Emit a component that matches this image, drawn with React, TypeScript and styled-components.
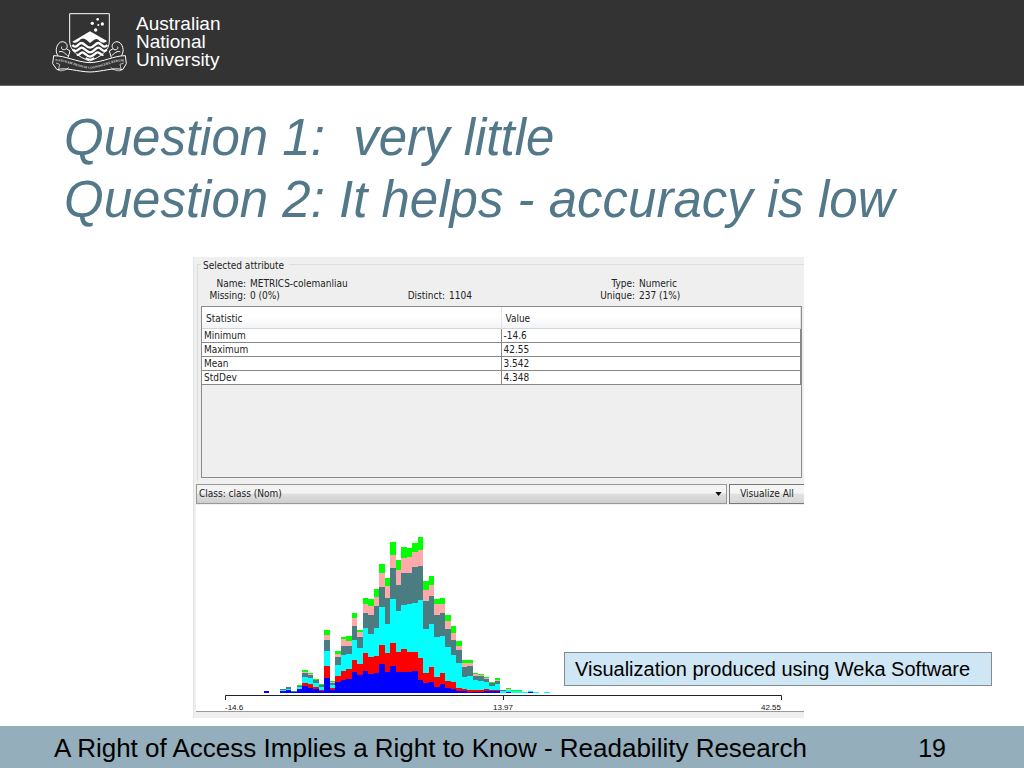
import React from "react";
import styled, { createGlobalStyle } from "styled-components";

const GlobalStyle = createGlobalStyle`
  * { box-sizing: border-box; }
  body { margin: 0; background: #fff; font-family: "Liberation Sans", Arial, sans-serif; color: #000; }
`;

const Slide = styled.div`
  min-height: 100vh;
  display: flex;
  flex-direction: column;
`;

const Header = styled.header`
  display: flex;
  align-items: flex-start;
  gap: 9px;
  height: 86px;
  padding: 12px 52px 0;
  background: #333;
  border-bottom: 1px solid #666;
`;

const Crest = styled.svg`
  display: block;
  width: 75px;
  height: 61px;
`;

const Wordmark = styled.div`
  padding-top: 3px;
  color: #fff;
  font-size: 19px;
  line-height: 18px;
`;

const Main = styled.main`
  position: relative;
  flex: 1;
`;

const Title = styled.h1`
  margin: 0;
  padding: 21px 64px 0;
  color: #52788a;
  font-size: 51px;
  line-height: 62px;
  font-weight: 400;
  font-style: italic;
  white-space: pre-wrap;
`;

const FigureGrid = styled.div`
  display: grid;
  grid-template-columns: 193fr 611fr 220fr;
  padding-top: 26px;
`;

const Weka = styled.section`
  grid-column: 2;
  overflow: hidden;
  padding-bottom: 6px;
  background: #efefef;
  border-left: 1px solid #e0e4e8;
  font-family: "DejaVu Sans Condensed", "DejaVu Sans", sans-serif;
  font-size: 10px;
  line-height: 12px;
  color: #222;
`;

const Group = styled.fieldset`
  margin: 0 0 0 3px;
  padding: 5px 2px 3px 3px;
  border: 1px solid #dcdcdc;
  border-width: 1px 0 0 1px;
  min-width: 0;
`;

const Legend = styled.legend`
  padding: 3px 5px 0 2px;
  line-height: 12px;
`;

const Facts = styled.dl`
  display: grid;
  grid-template-columns: 45px 150px 41px 140px 42px 1fr;
  column-gap: 4px;
  margin: 0 0 4px;
  padding-top: 1px;
  line-height: 12px;
  white-space: nowrap;
`;

const Term = styled.dt<{ $col: number }>`
  grid-column: ${(p) => p.$col};
  justify-self: end;
`;

const Fact = styled.dd`
  margin: 0;
`;

const TableFrame = styled.div`
  height: 172px;
  border: 1px solid #888b90;
`;

const Stats = styled.table`
  width: 100%;
  table-layout: fixed;
  border-collapse: separate;
  border-spacing: 0;
  background: #fff;
`;

const HeadCell = styled.th`
  height: 22px;
  padding: 2px 4px 0;
  text-align: left;
  font-weight: 400;
  background: linear-gradient(#fff 45%, #f3f4f6);
  border-bottom: 1px solid #d5d5d5;
  border-right: 1px solid #e0e3e8;
`;

const Cell = styled.td`
  height: 14px;
  padding: 0 2px;
  line-height: 13px;
  border-bottom: 1px solid #888;
  border-right: 1px solid #888;
`;

const Controls = styled.div`
  display: flex;
  gap: 2px;
  margin-left: 2px;
  padding: 3px 0 1px;
`;

const SelectWrap = styled.label`
  position: relative;
  flex: 1;
`;

const Select = styled.select`
  appearance: none;
  display: block;
  width: 100%;
  height: 20px;
  padding: 0 2px;
  border: 1px solid #999;
  border-radius: 0;
  background: linear-gradient(#f3f3f3 45%, #dedede 50%, #cfcfcf);
  font: inherit;
  color: inherit;
`;

const Arrow = styled.svg`
  position: absolute;
  right: 5px;
  top: 8px;
  width: 7px;
  height: 4px;
  pointer-events: none;
`;

const Button = styled.button`
  width: 75px;
  height: 20px;
  padding: 0;
  border: 1px solid #777;
  border-right: 0;
  background: linear-gradient(#f5f5f5 45%, #e2e2e2 50%, #d6d6d6);
  font: inherit;
  color: inherit;
`;

const Plot = styled.svg`
  display: block;
  width: calc(100% - 2px);
  margin-left: 2px;
  background: #fff;
  border-bottom: 1px solid #999;
`;

const Note = styled.p`
  position: absolute;
  right: 32px;
  bottom: 40px;
  width: 428px;
  margin: 0;
  padding: 5px 10px 4px;
  background: #cfe6f4;
  border: 1px solid #808a90;
  font-size: 20px;
  line-height: 23px;
`;

const Footer = styled.footer`
  display: flex;
  justify-content: space-between;
  height: 42px;
  padding: 2px 78px 0 54px;
  background: #94aebc;
  font-size: 26px;
  line-height: 40px;
  white-space: nowrap;
`;

const PageNumber = styled.span`
  font-size: 25px;
`;

const LAYERS = ["#00ff00", "#ffaaaa", "#4a7c82", "#00ffff", "#ff0000", "#0000ff"];

// Heights above the axis, in thirds of a pixel, cumulative per class: [bin, green, pink, grey, cyan, red, blue].
const BINS: number[][] = [
  [-3, 6, 6, 6, 6, 6, 6],
  [0, 11, 11, 11, 7, 4, 4],
  [1, 18, 17, 16, 12, 8, 8],
  [2, 5, 5, 5, 3, 3, 3],
  [3, 23, 20, 20, 16, 11, 11],
  [4, 69, 62, 58, 46, 28, 20],
  [5, 60, 57, 53, 43, 25, 15],
  [6, 42, 39, 37, 28, 18, 12],
  [7, 27, 24, 23, 18, 8, 6],
  [8, 187, 173, 157, 125, 80, 44],
  [9, 35, 31, 29, 22, 15, 8],
  [10, 126, 117, 108, 83, 50, 33],
  [11, 168, 160, 141, 114, 65, 38],
  [12, 171, 155, 140, 116, 71, 40],
  [13, 240, 225, 200, 158, 98, 61],
  [14, 187, 182, 168, 135, 86, 52],
  [15, 284, 267, 240, 194, 119, 65],
  [16, 281, 260, 233, 177, 107, 56],
  [17, 311, 288, 261, 195, 111, 59],
  [18, 387, 358, 317, 256, 143, 86],
  [19, 344, 320, 284, 206, 119, 62],
  [20, 452, 414, 374, 281, 149, 80],
  [21, 398, 368, 323, 246, 122, 62],
  [22, 437, 405, 358, 264, 131, 62],
  [23, 434, 406, 359, 265, 122, 61],
  [24, 448, 423, 376, 269, 122, 65],
  [25, 467, 428, 381, 278, 104, 39],
  [26, 336, 307, 275, 192, 59, 29],
  [27, 350, 324, 290, 207, 77, 33],
  [28, 281, 266, 234, 167, 47, 18],
  [29, 284, 266, 239, 170, 60, 25],
  [30, 232, 215, 191, 138, 34, 15],
  [31, 200, 180, 158, 112, 31, 11],
  [32, 155, 141, 128, 88, 15, 6],
  [33, 98, 89, 77, 48, 10, 5],
  [34, 98, 89, 80, 50, 9, 3],
  [35, 59, 56, 50, 38, 8, 3],
  [36, 57, 53, 49, 36, 8, 3],
  [37, 47, 45, 41, 32, 10, 4],
  [38, 33, 30, 30, 21, 8, 4],
  [39, 44, 39, 35, 26, 8, 4],
  [40, 7, 7, 7, 6, 0, 0],
  [41, 14, 10, 9, 8, 2, 2],
  [42, 9, 6, 6, 6, 0, 0],
  [43, 7, 4, 4, 4, 0, 0],
  [44, 3, 3, 3, 3, 0, 0],
  [45, 5, 5, 5, 4, 3, 3],
  [46, 3, 3, 3, 3, 0, 0],
  [48, 3, 3, 3, 3, 0, 0],
];

const STATS = [
  ["Minimum", "-14.6"],
  ["Maximum", "42.55"],
  ["Mean", "3.542"],
  ["StdDev", "4.348"],
];

function AnuCrest() {
  return (
    <Crest viewBox="35 35 225 183" fill="none" stroke="#fff" strokeWidth="3" aria-hidden="true">
      <path d="M88 40H207V122C207 150 182 170 148 182C114 170 88 150 88 122Z" fill="#333" />
      <g fill="#fff" stroke="none">
        <path d="M96 124L149 93L200 122C191 131 182 127 174 118C164 111 158 122 149 128C140 121 132 109 121 117C112 127 104 131 96 124Z" />
        <circle cx="172" cy="57" r="4" />
        <circle cx="156" cy="69" r="5" />
        <circle cx="186" cy="71" r="5" />
        <circle cx="174" cy="74" r="3" />
        <circle cx="166" cy="89" r="5" />
      </g>
      <g strokeWidth="7">
        <path d="M96 134C108 148 114 128 123 128S138 142 149 142S165 128 174 128S190 148 201 134" />
        <path d="M98 148C110 160 116 142 124 142S138 156 149 156S165 142 174 142S188 160 199 148" />
        <path d="M110 163C117 166 120 156 126 156S140 169 149 169S165 156 172 156S182 166 189 163" />
        <path d="M136 173Q149 182 162 173" strokeWidth="5" />
      </g>
      <path
        d="M40 166C76 166 107 185 149 187C191 185 220 166 255 166L258 190L247 208C220 200 188 214 149 215C110 214 78 200 50 208L37 190Z"
        fill="#333"
      />
      <path d="M47 188L58 192L54 210C64 214 80 208 86 201M250 188L239 192L243 210C233 214 217 208 211 201" strokeWidth="2" />
      <g strokeWidth="3">
        <path d="M53 166C42 154 49 125 66 124C79 125 84 137 78 145C71 152 61 147 64 139M78 145L89 152L83 172M56 155C64 149 75 160 82 166" />
        <path d="M243 166C254 154 247 125 230 124C217 125 212 137 218 145C225 152 235 147 232 139M218 145L207 152L213 172M240 155C232 149 221 160 214 166" />
      </g>
      <path id="motto-line" d="M44 183C82 182 110 203 149 205C188 203 214 182 252 183" stroke="none" />
      <text fontFamily="Liberation Serif, serif" fontSize="10" fontWeight="700" fill="#ddd" stroke="none" textAnchor="middle">
        <textPath href="#motto-line" startOffset="50%">
          NATURAM PRIMUM COGNOSCERE RERUM
        </textPath>
      </text>
    </Crest>
  );
}

function Histogram() {
  return (
    <Plot viewBox="196 505 608 206" role="img" aria-label="Histogram of METRICS-colemanliau by class">
      <g shapeRendering="crispEdges">
        {LAYERS.map((color, layer) => (
          <g key={color} fill={color}>
            {BINS.filter((bin) => bin[layer + 1] > 0).map((bin) => {
              const height = bin[layer + 1] / 3;
              return <rect key={bin[0]} x={280.2 + bin[0] * 5.5} y={692.7 - height} width={5.5} height={height} />;
            })}
          </g>
        ))}
      </g>
      <path d="M225.5 700V695.5H781.5V700M503.5 695.5V700" fill="none" stroke="#222" />
      <g fontFamily="Liberation Sans, Arial, sans-serif" fontSize="8" fill="#111">
        <text x="225" y="710">-14.6</text>
        <text x="503" y="710" textAnchor="middle">13.97</text>
        <text x="781" y="710" textAnchor="end">42.55</text>
      </g>
    </Plot>
  );
}

export default function App() {
  return (
    <Slide>
      <GlobalStyle />
      <Header>
        <AnuCrest />
        <Wordmark>
          Australian
          <br />
          National
          <br />
          University
        </Wordmark>
      </Header>
      <Main>
        <Title>{"Question 1:  very little\nQuestion 2: It helps - accuracy is low"}</Title>
        <FigureGrid>
          <Weka>
            <Group>
              <Legend>Selected attribute</Legend>
              <Facts>
                <Term $col={1}>Name:</Term>
                <Fact>METRICS-colemanliau</Fact>
                <Term $col={5}>Type:</Term>
                <Fact>Numeric</Fact>
                <Term $col={1}>Missing:</Term>
                <Fact>0 (0%)</Fact>
                <Term $col={3}>Distinct:</Term>
                <Fact>1104</Fact>
                <Term $col={5}>Unique:</Term>
                <Fact>237 (1%)</Fact>
              </Facts>
              <TableFrame>
                <Stats>
                  <thead>
                    <tr>
                      <HeadCell scope="col">Statistic</HeadCell>
                      <HeadCell scope="col">Value</HeadCell>
                    </tr>
                  </thead>
                  <tbody>
                    {STATS.map(([name, value]) => (
                      <tr key={name}>
                        <Cell>{name}</Cell>
                        <Cell>{value}</Cell>
                      </tr>
                    ))}
                  </tbody>
                </Stats>
              </TableFrame>
            </Group>
            <Controls>
              <SelectWrap>
                <Select aria-label="Class attribute">
                  <option>Class: class (Nom)</option>
                </Select>
                <Arrow viewBox="0 0 8 5" aria-hidden="true">
                  <path d="M0 0H8L4 5Z" fill="#111" />
                </Arrow>
              </SelectWrap>
              <Button type="button">Visualize All</Button>
            </Controls>
            <Histogram />
          </Weka>
        </FigureGrid>
        <Note>Visualization produced using Weka Software</Note>
      </Main>
      <Footer>
        <span>A Right of Access Implies a Right to Know - Readability Research</span>
        <PageNumber>19</PageNumber>
      </Footer>
    </Slide>
  );
}
